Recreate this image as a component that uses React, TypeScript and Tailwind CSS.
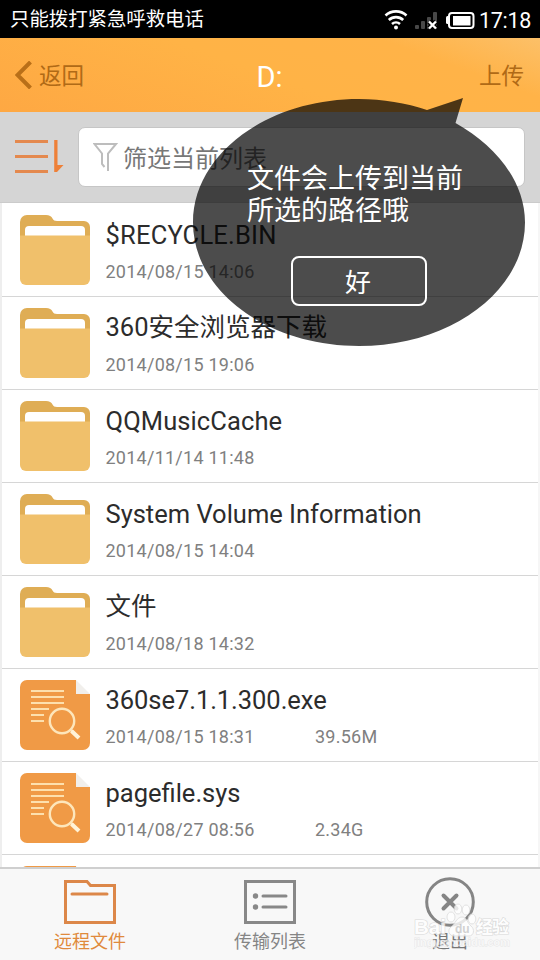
const files = [
  { name: '$RECYCLE.BIN', date: '2014/08/15 14:06', spacing: 'tracking-[0.2px]' },
  { name: '360安全浏览器下载', date: '2014/08/15 19:06', cjk: true },
  { name: 'QQMusicCache', date: '2014/11/14 11:48', spacing: 'tracking-[0.1px]' },
  { name: 'System Volume Information', date: '2014/08/15 14:04' },
  { name: '文件', date: '2014/08/18 14:32', cjk: true },
  { name: '360se7.1.1.300.exe', date: '2014/08/15 18:31', size: '39.56M', spacing: 'tracking-[-0.05px]', doc: true },
  { name: 'pagefile.sys', date: '2014/08/27 08:56', size: '2.34G', doc: true },
];

function FolderIcon() {
  return (
    <svg width="70" height="70" viewBox="0 0 70 70" className="block shrink-0">
      <path d="M0 30V7a7 7 0 0 1 7-7h19q5 0 6.500 3.500Q33.500 6 37 6h27a6 6 0 0 1 6 6v18z" fill="#dfad55" />
      <path d="M5 22v-7q0-4 4-4h52q4 0 4 4v7z" fill="#fff" />
      <path d="M0 20.500h70V64a6 6 0 0 1-6 6H6a6 6 0 0 1-6-6z" fill="#f0c06b" />
    </svg>
  );
}

function DocIcon() {
  return (
    <svg width="70" height="70" viewBox="0 0 70 70" className="block shrink-0">
      <path d="M7 0h49v14h14v49a7 7 0 0 1-7 7H7a7 7 0 0 1-7-7V7a7 7 0 0 1 7-7z" fill="#f09a46" />
      <path d="M56 0l14 14H56z" fill="#f1efec" />
      <path d="M11 11h33M11 17h33M11 23h33M11 29h18M11 35h13M11 41h13" stroke="#fde0ae" strokeWidth="2" />
      <circle cx="42" cy="41" r="12.200" fill="none" stroke="#fde6bb" strokeWidth="2.400" />
      <path d="M50.500 49.500l3 3" stroke="#fde6bb" strokeWidth="2.500" />
      <path d="M51.500 51l7.500 7" stroke="#fff3d8" strokeWidth="4" />
    </svg>
  );
}

function StatusBar() {
  return (
    <div className="flex h-[38px] shrink-0 items-center justify-between bg-black pl-[10px] pr-[9px] text-white">
      <span className="pt-[2px] text-[19.4px] leading-[36px]">只能拨打紧急呼救电话</span>
      <div className="flex items-center">
        <svg width="92" height="24" viewBox="0 0 92 24" className="block">
          <g fill="none" stroke="#fff" strokeWidth="2.600">
            <path d="M1.500 8.500a15.500 15.500 0 0 1 21 0" />
            <path d="M4.800 13a10.500 10.500 0 0 1 14.400 0" />
            <path d="M8 17a6 6 0 0 1 8 0" />
          </g>
          <circle cx="12" cy="20.500" r="2" fill="#fff" />
          <g fill="#484848">
            <rect x="31" y="18" width="4" height="4" rx="1" />
            <rect x="37" y="14" width="4" height="8" rx="1" />
            <rect x="43" y="10" width="4" height="12" rx="1" />
            <rect x="49" y="5" width="4" height="17" rx="1" />
          </g>
          <path d="M45 14.500l7 7M52 14.500l-7 7" stroke="#000" strokeWidth="5" />
          <path d="M45 14.500l7 7M52 14.500l-7 7" stroke="#fff" strokeWidth="2.400" />
          <path d="M65 9v8h-1.500q-1.500 0-1.500-1.500v-5q0-1.500 1.500-1.500z" fill="#fff" />
          <rect x="65" y="6" width="24.500" height="15" rx="3" fill="none" stroke="#fff" strokeWidth="2" />
          <rect x="69" y="9" width="17.500" height="9.500" fill="#fff" />
        </svg>
        <span className="pl-[3px] pt-[3px] text-[21.500px] leading-6 tracking-[-0.3px]">17:18</span>
      </div>
    </div>
  );
}

function Header() {
  return (
    <header className="grid h-[74px] shrink-0 grid-cols-3 items-center bg-[linear-gradient(20deg,#fea843_0%,#ffb346_50%,#ffb348_78%,#fcc068_100%)] pl-[15px] pr-[16px] text-[22.500px] text-[#b06a16]">
      <div className="flex items-center gap-[7px]">
        <svg width="17" height="28" viewBox="0 0 17 28" className="block">
          <path d="M15.500 1L2.500 14l13 13" fill="none" stroke="#b96f18" strokeWidth="4" />
        </svg>
        <span className="pt-[3px]">返回</span>
      </div>
      <h1 className="pt-[5px] text-center text-[29px] text-white">D:</h1>
      <span className="pt-[3px] text-right">上传</span>
    </header>
  );
}

function FilterBar() {
  return (
    <div className="flex h-[91px] shrink-0 border-b border-[#cbcbcb] bg-[#d5d5d5] pl-[15px] pr-[15px] pt-[15px]">
      <svg width="49" height="36" viewBox="0 0 49 36" className="mt-3 mr-[14px] block shrink-0">
        <path d="M0 2.500h33M0 17.500h33M0 32.500h33" stroke="#e4894e" strokeWidth="3.200" />
        <path d="M39.200 1h3.300v25h6l-6.500 7h-2.800z" fill="#ee8038" />
      </svg>
      <div className="flex h-[60px] flex-1 items-center rounded-[7px] border border-[#c6c6c6] bg-white pl-[14px]">
        <svg width="25" height="30" viewBox="0 0 25 30" className="block shrink-0">
          <path d="M15 29V11.500L23 2H1.500L9 11.500V22l2.500 3" fill="none" stroke="#bdbdbd" strokeWidth="2" />
        </svg>
        <span className="pl-[5px] pt-[3px] text-[24px] text-[#777]">筛选当前列表</span>
      </div>
    </div>
  );
}

function Tip() {
  return (
    <div className="absolute left-[193px] top-[97px] h-[249px] w-[333px] text-white">
      <svg width="333" height="249" viewBox="0 0 333 249" className="absolute inset-0">
        <path d="M234 13L270 1L262.500 26C302 48 332 84 332 125.500C332 194 257.700 249 166 249S0 194 0 125.500S74.300 2 166 2C190 2 213 6 234 13z" fill="#000" fillOpacity="0.7" />
      </svg>
      <div className="relative flex flex-col pl-[54px] pt-[66px]">
        <p className="text-[27px] leading-[32px]">文件会上传到当前<br />所选的路径哦</p>
        <button className="ml-[44px] mt-[29px] h-[50px] w-[136px] rounded-[8px] border-2 border-white pt-[4px] pr-[2px] text-[26px] leading-[42px]">好</button>
      </div>
    </div>
  );
}

function Tab({ label, color, children }: { label: string; color: string; children: React.ReactNode }) {
  return (
    <div className={'flex flex-1 flex-col items-center ' + color}>
      <div className="flex h-[62px] items-center pt-[4px]">{children}</div>
      <span className="text-[18px] leading-[22px]">{label}</span>
    </div>
  );
}

function Watermark() {
  return (
    <div className="absolute bottom-[10px] left-[414px] w-[100px] opacity-80">
      <svg width="100" height="48" viewBox="0 0 100 48" className="block">
        <g fill="#fff" stroke="#ddd" strokeWidth="1">
          <ellipse cx="37" cy="15" rx="4" ry="5" />
          <ellipse cx="44" cy="7" rx="3.800" ry="5" />
          <ellipse cx="52" cy="8" rx="3.800" ry="5" />
          <ellipse cx="58" cy="17" rx="3.800" ry="5" />
          <path d="M48 15c-5 0-7 7-11 10s-2 9 3 9h15c5 0 6-7 2-10s-4-9-9-9z" />
        </g>
        <g fill="#fff" stroke="#d2d2d2" strokeWidth="1.200" paintOrder="stroke" fontFamily="Liberation Sans, Noto Sans CJK SC, sans-serif" fontWeight="bold">
          <text x="0" y="32" fontSize="21" textLength="32" lengthAdjust="spacingAndGlyphs">Bai</text>
          <text x="62" y="31" fontSize="17" textLength="33">经验</text>
          <text x="0" y="44" fontSize="10" strokeWidth="0.800" fillOpacity="0.7" strokeOpacity="0.6" textLength="96" lengthAdjust="spacingAndGlyphs">jingyan.baidu.com</text>
        </g>
        <text x="41" y="31" fontSize="12" fontWeight="bold" fill="#c9c9c9" fontFamily="Liberation Sans, sans-serif">du</text>
      </svg>
    </div>
  );
}

export default function App() {
  return (
    <main className="relative flex h-[960px] w-[540px] flex-col overflow-hidden bg-white font-[Roboto,'Noto_Sans_CJK_SC',sans-serif]">
      <StatusBar />
      <Header />
      <FilterBar />
      <section className="flex h-[664px] shrink-0 flex-col overflow-hidden border-x-2 border-l-[#eee] border-r-[#f6f6f6] pt-px">
        {files.map((f) => (
          <div key={f.name} className="flex h-[93px] shrink-0 border-b border-[#d6d6d6] pl-[18px] pt-[11px]">
            {f.doc ? <DocIcon /> : <FolderIcon />}
            <div className="flex flex-col pl-[15.500px] pt-[5px]">
              <span className={(f.cjk ? 'leading-[29px] ' : 'leading-[30px] ') + (f.spacing ?? '') + ' h-[30px] whitespace-nowrap text-[25.500px] text-[#2c2c2c]'}>{f.name}</span>
              <div className="mt-3 flex text-[18px] leading-5 tracking-[0.25px] text-[#808080]">
                <span className="w-[209.500px]">{f.date}</span>
                <span>{f.size}</span>
              </div>
            </div>
          </div>
        ))}
        <div className="flex shrink-0 pl-[18px] pt-[11px]"><DocIcon /></div>
      </section>
      <nav className="flex h-[93px] shrink-0 border-t-2 border-[#cfcfcf] bg-[#f8f8f8]">
        <Tab label="远程文件" color="text-[#e08a3c]">
          <svg width="52" height="44" viewBox="0 0 52 44" className="block" fill="none" stroke="#dc8749" strokeWidth="3">
            <path d="M1.500 1.500h21.500l3.500 4h24v37h-49z" />
            <path d="M8 14h35" strokeLinecap="round" />
          </svg>
        </Tab>
        <Tab label="传输列表" color="text-[#858585]">
          <svg width="52" height="44" viewBox="0 0 52 44" className="block" fill="none" stroke="#888" strokeWidth="3">
            <rect x="1.500" y="1.500" width="49" height="41" />
            <path d="M19 16h23M19 27h23" strokeLinecap="round" />
            <g fill="#888" stroke="none"><circle cx="11.500" cy="16" r="2.700" /><circle cx="11.500" cy="27" r="2.700" /></g>
          </svg>
        </Tab>
        <Tab label="退出" color="text-[#777]">
          <svg width="50" height="50" viewBox="0 0 50 50" className="block" fill="none" stroke="#858585">
            <circle cx="25" cy="25" r="23.300" strokeWidth="3" />
            <path d="M18.500 18.500l13 13M31.500 18.500l-13 13" strokeWidth="4" strokeLinecap="round" />
          </svg>
        </Tab>
      </nav>
      <Tip />
      <Watermark />
    </main>
  );
}
